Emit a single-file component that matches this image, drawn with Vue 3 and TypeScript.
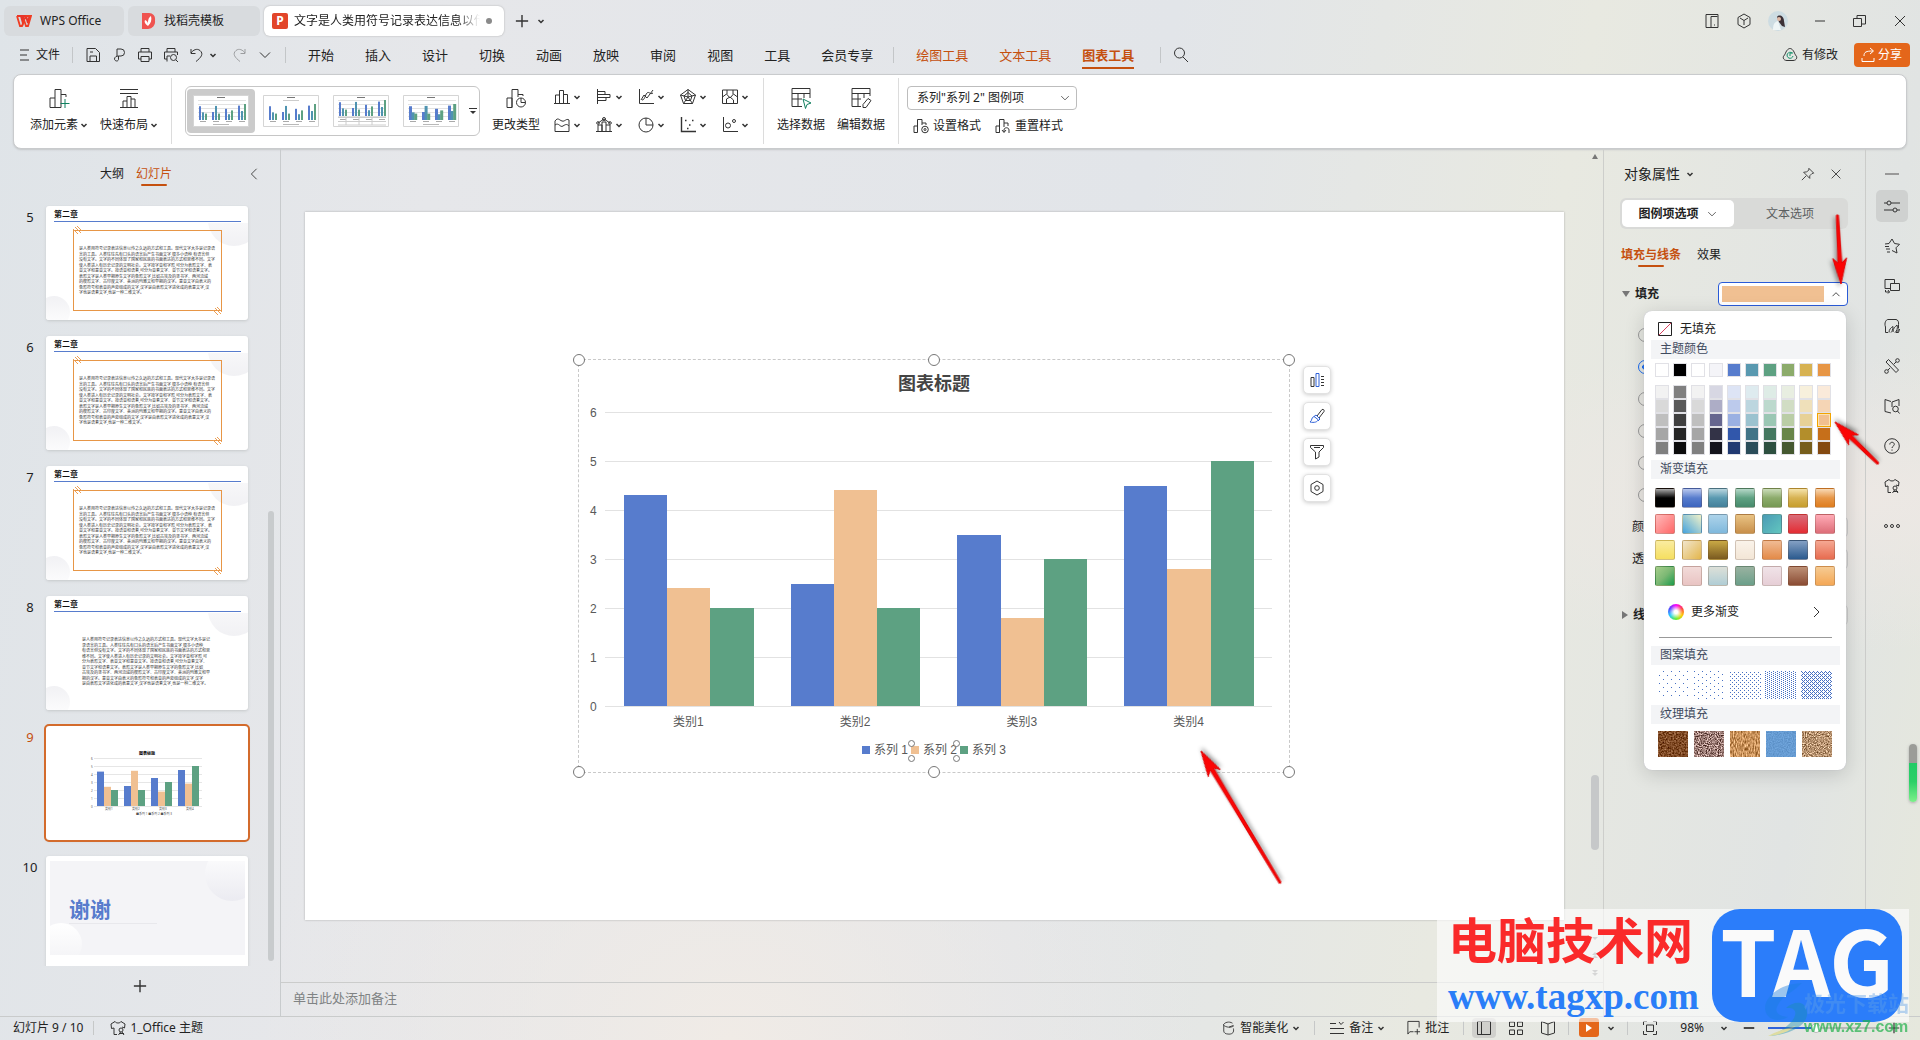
<script setup lang="ts">
import { h, ref } from 'vue'

const glyphs: Record<string, string> = {
  wps: '<path d="M1 3h4l2 7 1-3-1-4h3l2 7 1.500-7h-3L9 6" fill="none" stroke="#e8352a" stroke-width="2"/><path d="M9.500 3H15l-3 10H10L8 7l-2 6H4L1 3" fill="none" stroke="#f03c22" stroke-width="1.800"/>',
  docer: '<path d="M2 0h7a6 6 0 0 1 6 7v1a7 7 0 0 1-7 8H2z" fill="#ef5350" stroke="none"/><path d="M8 13C5 11 4 9 5 7c2 1 3 2 3 4 0-3 0-6 3-8 1 4 0 7-3 10z" fill="#fff" stroke="none"/>',
  menu: '<path d="M4 3h9M4 8h7M4 13h9"/>',
  save: '<path d="M2 1.500h8.500l4 4v9H2zM5 14V9h6.500v5M5 5h3"/>',
  export: '<path d="M6 9V2h4a3.500 3.500 0 1 1 0 7H7.500c-2 0-4 1-4 3s3.500 3 4 .5V9"/>',
  print: '<path d="M4 5V1.500h8V5M4 12H1.500V5h13v7H12M4 9.500h8v5H4z"/>',
  preview: '<path d="M4 5V1.500h8V5M4 12H1.500V5h13v3M4 14.500V9h3"/><circle cx="10.500" cy="10.500" r="3"/><path d="M13 13l2 2"/>',
  undo: '<path d="M2 2v4.500h4.500M2 6c2-3 6-5 9-2.500 4 3.500 1 7-4 11"/>',
  redo: '<path d="M14 2v4.500H9.500M14 6c-2-3-6-5-9-2.500-4 3.500-1 7 4 11"/>',
  down: '<path d="M5.500 7l2.500 2.500L10.500 7" stroke-width="1.500"/>',
  wide: '<path d="M3 5.500l5 5 5-5"/>',
  up: '<path d="M4 10.500l4-4 4 4"/>',
  left: '<path d="M11 2L5 8l6 6"/>',
  right: '<path d="M6 3l5 5-5 5"/>',
  plus: '<path d="M8 1v14M1 8h14" stroke-width="1.600"/>',
  minus: '<path d="M2 8h12" stroke-width="2"/>',
  min: '<path d="M3 8h10"/>',
  restore: '<path d="M1.500 5.500h8v8h-8zM5 5V2.500h8.500V11H10"/>',
  close: '<path d="M3 3l10 10M13 3L3 13"/>',
  search: '<circle cx="6.500" cy="6" r="5"/><path d="M10 10l5 5"/>',
  panel: '<path d="M2 1.500h12v13H2zM7 14V3.500h6.500M10 12h1"/>',
  cube: '<path d="M8 1l6 3.500v7L8 15l-6-3.500v-7zM4 5l4 2.500L12 5M8 7.500V12"/>',
  cloud: '<path d="M5 13.500c-4 0-5-4-2-6C4 4 6 1.500 8 1.500s4 2.500 5 6c3 2 2 6-2 6z"/><path d="M10 6a3 3 0 1 0 1 3M8 6h3M8 6V9" stroke="#16926b"/>',
  share: '<path d="M4 9c0-4 2-5 9-5M10 1l3.500 3L10 7M2 11v3.500h12V11"/>',
  addel: '<path d="M2 20.500V11h5v9.500zM7 11V2.500h6V20.500H7M13 7.500h5V10"/><path d="M17 12v9M12.500 16.500h9" stroke="#118060"/>',
  layout: '<path d="M2 2.500h18M2 6.500h18M2 20.500h18M5 20v-6h4v6M9 14v-4.500h4V20M13 12h4v8"/>',
  chtype: '<path d="M2 20.500V11h5v9.500zM7 20.500V2.500h6V10M13 7.500h5V9"/><circle cx="16" cy="15.500" r="4.500"/><path d="M16 11v4.500h4.500"/>',
  seldata: '<path d="M12 19.500H2v-18h18V11M2 6.500h18M8 6.500v13M14 6.500V11M2 12h10"/><path d="M13 12l8 4-4 1.500-1.500 4z" stroke="#118060"/>',
  editdata: '<path d="M11 19.500H2v-18h18V9M2 6.500h18M8 6.500v13M14 6.500V11M2 12h9"/><path d="M18 11.500l3 2-5 7h-3v-3z"/>',
  bar: '<path d="M1 15.500h16M2.500 15V7h4v8M6.500 15V2.500h4V15M10.500 6.500h4V15"/>',
  hbar: '<path d="M2.500 1v15M3 3.500h7v3H3M3 6.500h12v3H3M3 9.500h8v3H3"/>',
  line: '<path d="M2.500 1v14.500H17M4 12l3-5 3 3 6-8M5 12c3 0 3-5 5-7s3 2 6 0"/>',
  radar: '<path d="M9 1.500l7.500 5.500-3 8.500h-9L1.500 7zM9 4.500l4 3.500-1.500 4.500h-5L5 8zM9 1.500V9M1.500 7L9 9l7.500-2M4.500 15.500L9 9l4.500 6.500"/>',
  map: '<path d="M1.500 2h15v13.500h-15zM1.500 9l4-3 3.500 4 3.500-4 4 3M6 2v4M12 2v4M5.500 15V11l3.500-2 3.500 3v3"/>',
  area: '<path d="M2 15.500V5c3-4 4-1 7 0 3 1 4-3 7-1v11.500zM2 9c4-3 5 3 8 1 3-2 4-2 6 0"/>',
  combo: '<path d="M1 15.500h16M3 15V9h4v6M7 15V6h4v9M11 9h4v6M3 7l6-4 6 4"/><circle cx="9" cy="3" r="1.500"/><circle cx="3" cy="7" r="1.300"/><circle cx="15" cy="7" r="1.300"/>',
  pie: '<circle cx="9" cy="9" r="7"/><path d="M9 2v7h7"/>',
  scatter: '<path d="M2.500 1v14.500H17M6 4.500h1.500M10 9h1.500M13 4.500h1.500M8 12.500h1.500" stroke-width="1.400"/>',
  bubble: '<path d="M2.500 1v14.500H17"/><circle cx="7" cy="9.500" r="2.500"/><circle cx="13" cy="5" r="1.500"/>',
  fmt: '<path d="M1 14.500V8h3.500v6.500zM4.500 14V1.500H9V7M9 5h4v2"/><circle cx="12" cy="11.500" r="3.300"/><circle cx="12" cy="11.500" r="1"/>',
  reset: '<path d="M1 14.500V8h3.500v6.500zM4.500 14.500V1.500H9V9M9 5h4v3M14 15V12c0-3-5-3-5 0v2M7 12l2 2.500L11 12"/>',
  pin: '<path d="M9 1.500L14.500 7l-2 .5-2.500 2.500v3L3 6l3.500-.5L9 3.500zM6 10l-5 5"/>',
  chartel: '<path d="M2 5.500h3v9H2zM12 4.500h3M12 7.500h3M12 10.500h3M12 13.500h3"/><path d="M7 1.500h3v13H7z" stroke="#2f62d9"/>',
  brush: '<path d="M8 8l5-6.500c1.500-.5 2.500.5 2 2L10 10z"/><path d="M5 8.500l2-1.500 4 4-2 2M5 8.500c-3 1-1.500 4-4 5.500 4 1 8 0 8-2.500z" stroke="#2f62d9"/>',
  funnel: '<path d="M1.500 1.500h13v2L10 8v5l-3.500 2V8L1.500 3.500zM5 3.500h6"/>',
  hexa: '<path d="M8 1l6 3.500v7L8 15l-6-3.500v-7z"/><circle cx="8" cy="8" r="2.300"/>',
  sliders: '<path d="M0 5h3M7 5h9M0 12h9M13 12h3"/><circle cx="5" cy="5" r="2"/><circle cx="11" cy="12" r="2"/>',
  star: '<path d="M5 5.500L8 1l2.500 4.500 5 .8-3.500 3.500 1 5.200-5-2.500M1 6l4-.5M1 8.500h4M2 11h4M3 14h3"/>',
  shapes: '<path d="M1 1.500h9.500v4M6 10.500H1v-9M6.500 5.500h9v7h-9zM1.500 12v2h4M4 12l1.500 2L4 15.500"/>',
  image: '<path d="M4 14.500H1.500V9C0 5 2 1.500 4 1.500h8c2 0 3 3 2.500 5v4M5 14.500c0-3 2-5 4-6 0 3-1 5-2 6M9 14c0-4 2-5 4-7 1 3 0 6-2 7.500M12 14.500l3.500-3.500-1 3.500z"/>',
  tools: '<path d="M2 4l2.500-2.500L14.500 12 12 14.500zM10 6l2-2M6 10l-2 2"/><circle cx="13.500" cy="2.500" r="1.800"/><circle cx="2.500" cy="13.500" r="1.800"/>',
  book: '<path d="M7 3.500L1 1.500v12l6 1.500M8 4l7-2.500V8M8 4v5"/><circle cx="11.500" cy="11" r="2.800"/><path d="M13.500 13l2 2.500"/>',
  help: '<circle cx="8" cy="8" r="7.300"/><path d="M5.800 6.500c0-3 4.500-3 4.500 0 0 1.500-2.300 1.800-2.300 3.500M8 11.500v1.200"/>',
  shirt: '<path d="M4 14.500V8L1.500 8.500 1 4l4-2.500c1 2 5 2 6 0L15 4l-.5 4L12 7M4 14.500h3"/><circle cx="11" cy="10" r="2"/><path d="M8.500 15l2-3M12 12l2 3M9 13.500h5"/>',
  dots: '<circle cx="2" cy="8" r="1.500"/><circle cx="8" cy="8" r="1.500"/><circle cx="14" cy="8" r="1.500"/>',
  magic: '<path d="M2 4.500v7c0 2 2 3.500 6 3.500s6-2 5-6.500M1.500 4.500C3 1.500 8 0 12 2.500M1.500 4.500c3 3 9 3.500 12 1M8 7l5-2"/>',
  notes: '<path d="M1 3.500h6M1 8.500h14M1 13.500h14M10 2l2 2.500L14.500 2"/>',
  comment: '<path d="M8 12.500H4L2 15V1.500h12V8M12 9.500v6M9 12.500h6"/>',
  normal: '<path d="M1.500 1.500h13v13h-13zM5.500 1.500v13"/>',
  grid: '<path d="M1.500 2h5v4.500h-5zM9.500 2h5v4.500h-5zM1.500 10h5v4.500h-5zM9.500 10h5v4.500h-5z"/>',
  read: '<path d="M8 4L1.500 1.500V13L8 15l6.500-2V1.500zM8 4v11"/>',
  fit: '<path d="M1.500 5V1.500H5M11 1.500h3.500V5M14.500 11v3.500H11M5 14.500H1.500V11M4.500 5h7v6.500h-7z"/>',
  nofill: '<path d="M1.500 1.500h13v13h-13z" stroke="#222"/><path d="M2 14L14 2" stroke="#d8405f"/>',
}
const Icon = (p: { n: string; s?: number; box?: number }) =>
  h('svg', {
    class: 'icon', width: p.s ?? 16, height: p.s ?? 16,
    viewBox: `0 0 ${p.box ?? 16} ${p.box ?? 16}`, 'aria-hidden': 'true', innerHTML: glyphs[p.n],
  })
Icon.props = ['n', 's', 'box']

const Arrow = (p: { len: number }) =>
  h('svg', { class: 'arrow', width: 1, height: 1, 'aria-hidden': 'true' }, [
    h('path', { d: `M0 0L-26 -7L-21 -2L-${p.len} -1V1L-21 2L-26 7Z`, fill: '#fb0404', stroke: '#e00505' }),
  ])
Arrow.props = ['len']

const menus = ['开始', '插入', '设计', '切换', '动画', '放映', '审阅', '视图', '工具', '会员专享']
const smallIcons = ['bar', 'hbar', 'line', 'radar', 'map', 'area', 'combo', 'pie', 'scatter', 'bubble']

const data = [[4.3, 2.4, 2], [2.5, 4.4, 2], [3.5, 1.8, 3], [4.5, 2.8, 5]]
const barColors = ['#577ccd', '#f0c092', '#5da182']
const styleColors = ['#577ccd', '#4f93b0', '#5da182']
const names = ['系列 1', '系列 2', '系列 3']
const handles = [[0, 0], [50, 0], [100, 0], [0, 100], [50, 100], [100, 100]]

const textA = [
  '是人类用符号记录表达信息以传之久远的方式和工具。现代文字大多是记录语',
  '言的工具。人类往往先有口头的语言后产生书面文字,很多小语种,有语言但',
  '没有文字。文字的不同体现了国家和民族的书面表达的方式和思维不同。文字',
  '使人类进入有历史记录的文明社会。文字按字音和字形,可分为表形文字、表',
  '音文字和意音文字。按语音和语素,可分为音素文字、音节文字和语素文字。',
  '表形文字是人类早期原生文字的象形文字,比如古埃及的圣书字、两河流域',
  '的楔形文字、古印度文字、美洲的玛雅文和早期的汉字。意音文字由表义的',
  '象形符号和表音的声旁组成的文字,汉字是由表形文字进化成的表意文字,汉',
  '字也是语素文字,也是一种二维文字。',
]
const textB = [
  '是人类用符号记录表达信息以传之久远的方式和工具。现代文字大多是记',
  '录语言的工具。人类往往先有口头的语言后产生书面文字,很多小语种,',
  '有语言但没有文字。文字的不同体现了国家和民族的书面表达的方式和思',
  '维不同。文字使人类进入有历史记录的文明社会。文字按字音和字形,可',
  '分为表形文字、表音文字和意音文字。按语音和语素,可分为音素文字、',
  '音节文字和语素文字。表形文字是人类早期原生文字的象形文字,比如',
  '古埃及的圣书字、两河流域的楔形文字、古印度文字、美洲的玛雅文和早',
  '期的汉字。意音文字由表义的象形符号和表音的声旁组成的文字,汉字',
  '是由表形文字进化成的表意文字,汉字也是语素文字,也是一种二维文字。',
]
const slides = [
  { n: 5, kind: 'frame' }, { n: 6, kind: 'frame' }, { n: 7, kind: 'frame' },
  { n: 8, kind: 'plain' }, { n: 9, kind: 'minichart' }, { n: 10, kind: 'end' },
]

const theme = ['#fff', '#000', '#fff', '#f4f4f8', '#577ccd', '#5999b0', '#5ea182', '#8cab6b', '#d7b252', '#e79646']
const ramps = [
  ['#f2f2f2', '#808080', '#f2f2f2', '#d7d7e3', '#dde4f5', '#deebef', '#deece6', '#e8eee1', '#f7f0dc', '#faeada'],
  ['#d9d9d9', '#595959', '#d9d9d9', '#adadc6', '#bccaec', '#bcd6df', '#bcd9cd', '#d1ddc4', '#efe0ba', '#f5d5b5'],
  ['#bfbfbf', '#404040', '#bfbfbf', '#66668f', '#9ab0e2', '#9bc2cf', '#9bc7b4', '#bacda6', '#e7d197', '#f1c090'],
  ['#a6a6a6', '#262626', '#a6a6a6', '#333347', '#3157ab', '#417487', '#457860', '#688549', '#b38e2b', '#c66f1a'],
  ['#808080', '#0d0d0d', '#808080', '#14141c', '#213a72', '#2b4d5a', '#2e5040', '#455830', '#775e1c', '#844a11'],
]
const gradients = [
  '#aaa,#000 50%,#000', '#b9c8ee,#577ccd 50%,#3c64be', '#b9d6df,#5999b0 50%,#44809a', '#b5d8c8,#5ea182 50%,#478a6c', '#cbdcba,#8cab6b 50%,#769853', '#f5e3ab,#d7b252 50%,#c69d2c', '#f8d9b5,#e79646 50%,#df7d1e',
  '135deg,#ffb9b9,#ff6868', '45deg,#45a3de,#f2f2c8', '#add3ea,#7fb8dc', '#e9c384,#c88f4a', '135deg,#4a9bb5,#62c6bf', '#d96d7a,#e42c33', '#ffabb6,#dd6d78',
  '#faeca0,#f5df60', '135deg,#f1e5cc,#e3b64c', '#c9a945,#7a5a20', '#faf3ea,#f3e6d6', '#f0bb94,#e38a48', '#84a0c4,#2b5a8e', '#f5a893,#e76c50',
  '135deg,#a5ce8a,#7cb874 50%,#1c9c4c', '#f2dbd9,#e9c4c3', '#dde0d8,#b0cdd5', '#99b2a0,#6b9f8a', '#f0e3e8,#e6ced6', '#bd9076,#8a4b33', '#f6cb93,#f4a755',
]
const patterns = [
  { w: 8, h: 8, d: [[0, 4], [4, 0]] },
  { w: 8, h: 6, d: [[0, 0], [4, 3]] },
  { w: 4, h: 4, d: [[0, 1], [2, 3]] },
  { w: 4, h: 2, d: [[0, 0], [2, 1]] },
  { w: 4, h: 4, d: [[0, 0], [1, 1], [3, 1], [2, 2], [1, 3], [3, 3]] },
]
const textures = [
  { c: '#7a4520', f: '0.6', k: 1 }, { c: '#957670', f: '0.9', k: 2.2 }, { c: '#c48d56', f: '0.9 0.3', k: 1.2 },
  { c: '#6196cd', f: '0.8', k: 0.3 }, { c: '#b28e6c', f: '0.9', k: 1.6 },
]
const sideTools = ['star', 'shapes', 'image', 'tools', 'book', 'help', 'shirt', 'dots']
const zoom = ref(42)
</script>

<template>
  <div class="app">
    <header class="titlebar">
      <button class="doc wps"><Icon n="wps" />WPS Office</button>
      <button class="doc docer"><Icon n="docer" />找稻壳模板</button>
      <button class="doc active"><b class="p">P</b><span class="fade">文字是人类用符号记录表达信息以传</span><i class="dot"></i></button>
      <button class="bare newtab" aria-label="新建"><Icon n="plus" :s="14" /></button>
      <button class="bare" aria-label="标签列表"><Icon n="down" /></button>
      <div class="winbtns">
        <button class="bare" aria-label="面板"><Icon n="panel" /></button>
        <button class="bare" aria-label="应用"><Icon n="cube" /></button>
        <svg class="avatar" width="20" height="20" viewBox="0 0 20 20"><circle cx="10" cy="10" r="10" fill="#cddce2" /><path d="M9 6c2-3 7-1 7 4l1 6-3-1-3-4z" fill="#3b3036" /><circle cx="11" cy="8" r="2" fill="#dfb9a6" /><path d="M5 19c0-5 1-8 5-9l3 9z" fill="#eef5f6" /></svg>
        <button class="bare" aria-label="最小化"><Icon n="min" /></button>
        <button class="bare" aria-label="还原"><Icon n="restore" /></button>
        <button class="bare" aria-label="关闭"><Icon n="close" /></button>
      </div>
    </header>

    <nav class="menubar">
      <button class="bare file"><Icon n="menu" />文件</button>
      <i class="vsep"></i>
      <div class="quick">
        <button v-for="q in ['save', 'export', 'print', 'preview']" :key="q" class="bare" :aria-label="q"><Icon :n="q" /></button>
        <button class="bare undo" aria-label="撤销"><Icon n="undo" /><Icon n="down" /></button>
        <button class="bare off" aria-label="恢复"><Icon n="redo" /></button>
        <button class="bare" aria-label="更多"><Icon n="wide" /></button>
      </div>
      <i class="vsep"></i>
      <div class="menus">
        <button v-for="m in menus" :key="m" class="bare menu">{{ m }}</button>
      </div>
      <i class="vsep"></i>
      <div class="menus tools">
        <button class="bare menu">绘图工具</button>
        <button class="bare menu">文本工具</button>
        <button class="bare menu current">图表工具</button>
      </div>
      <i class="vsep late"></i>
      <button class="bare find" aria-label="搜索"><Icon n="search" /></button>
      <button class="bare changed"><Icon n="cloud" />有修改</button>
      <button class="share"><Icon n="share" />分享</button>
    </nav>

    <section class="ribbon">
      <div class="group first">
        <button class="bare big"><Icon n="addel" :s="22" :box="22" /><span>添加元素<Icon n="down" class="chev" /></span></button>
        <button class="bare big"><Icon n="layout" :s="22" :box="22" /><span>快速布局<Icon n="down" class="chev" /></span></button>
      </div>
      <i class="rsep"></i>
      <div class="gallery">
        <button v-for="g in 4" :key="g" class="bare style" :class="{ on: g === 1 }" :aria-label="'样式 ' + g">
          <svg width="56" height="32" viewBox="0 0 56 32">
            <path d="M.5.500h55v31H.5z" fill="#fff" stroke="#d5d5d5" />
            <path d="M24 2.500h8" stroke="#777" />
            <path v-if="g === 2" d="M20 5.500h16" stroke="#ccc" />
            <path v-else d="M5 5.500h48M5 9.500h48M5 13.500h48M5 17.500h48M5 21.500h48" stroke="#e2e2e2" />
            <template v-for="(grp, i) in data" :key="i">
              <rect v-for="(v, j) in grp" :key="j" :x="6 + i * 13 + j * (g === 4 ? 2.600 : 3)" :y="(g === 3 ? 21 : 25) - v * 3.200" :width="g === 4 ? 3 : 2" :height="v * 3.200" :fill="styleColors[j]" />
              <path :d="`M${7 + i * 13} ${g === 3 ? 24.500 : 26.500}h6`" stroke="#aaa" />
            </template>
            <path v-if="g === 3" d="M5 22.500h48M5 26.500h48M5 30h48M13 22v8M26 22v8M39 22v8" stroke="#ccc" />
            <path v-else d="M20 29.500h16" stroke="#b9b9b9" />
          </svg>
        </button>
        <button class="bare more" aria-label="更多样式"><svg width="8" height="8"><path d="M0 1.500h8" stroke="#333" /><path d="M1 4h6L4 7z" fill="#333" /></svg></button>
      </div>
      <button class="bare big change"><Icon n="chtype" :s="22" :box="22" /><span>更改类型</span></button>
      <div class="minis">
        <button v-for="s in smallIcons" :key="s" class="bare mini" :aria-label="s"><Icon :n="s" :s="18" :box="18" /><Icon n="down" class="chev" /></button>
      </div>
      <i class="rsep"></i>
      <div class="group">
        <button class="bare big"><Icon n="seldata" :s="22" :box="22" /><span>选择数据</span></button>
        <button class="bare big"><Icon n="editdata" :s="22" :box="22" /><span>编辑数据</span></button>
      </div>
      <i class="rsep"></i>
      <div class="elems">
        <div class="selwrap">
          <select aria-label="图表元素"><option>系列"系列 2" 图例项</option></select><Icon n="wide" :s="12" />
        </div>
        <div class="pair">
          <button class="bare"><Icon n="fmt" />设置格式</button>
          <button class="bare"><Icon n="reset" />重置样式</button>
        </div>
      </div>
    </section>

    <div class="body">
      <aside class="outline">
        <div class="ohead">
          <button class="bare">大纲</button>
          <button class="bare cur">幻灯片</button>
          <button class="bare fold" aria-label="收起"><Icon n="left" :s="14" /></button>
        </div>
        <div class="list">
          <div v-for="s in slides" :key="s.n" class="row" :class="{ sel: s.n === 9 }">
            <span class="num">{{ s.n }}</span>
            <div class="thumb" :class="s.kind">
              <template v-if="s.kind === 'frame' || s.kind === 'plain'">
                <h4>第二章</h4>
                <i class="bub tr"></i><i class="bub bl"></i>
                <div class="paper">
                  <p v-for="(t, i) in s.kind === 'frame' ? textA : textB" :key="i">{{ t }}</p>
                  <template v-if="s.kind === 'frame'">
                    <svg v-for="c in ['c1', 'c2']" :key="c" class="clip" :class="c" width="9" height="8"><path d="M0 3l5 5M2 1l6 6M4 0l5 5" stroke="#ec9f55" fill="none" /></svg>
                  </template>
                </div>
              </template>
              <svg v-else-if="s.kind === 'minichart'" width="202" height="114" viewBox="0 0 202 114">
                <text x="101" y="29" class="t4" text-anchor="middle" font-weight="700">图表标题</text>
                <path v-for="k in 7" :key="k" :d="`M48 ${24.500 + k * 8}h108`" stroke="#e6e6e6" />
                <text v-for="k in 7" :key="'n' + k" x="45" :y="26 + k * 8" class="t3">{{ 7 - k }}</text>
                <template v-for="(grp, i) in data" :key="i">
                  <rect v-for="(v, j) in grp" :key="j" :x="51 + i * 27 + j * 7" :y="80 - v * 8" width="7" :height="v * 8" :fill="barColors[j]" />
                  <text :x="59 + i * 27" y="84" class="t3">类别{{ i + 1 }}</text>
                </template>
                <text x="90" y="89" class="t3">■系列 1 ■系列 2 ■系列 3</text>
              </svg>
              <div v-else class="thanks"><i class="big-tr"></i><i class="big-bl"></i><strong>谢谢</strong></div>
            </div>
          </div>
          <i class="sbar"></i>
        </div>
        <button class="bare addslide" aria-label="新建幻灯片"><Icon n="plus" :s="14" /></button>
      </aside>

      <main class="stage">
        <div class="canvas">
          <div class="slide">
            <div class="chart">
              <h2>图表标题</h2>
              <div class="plot">
                <div v-for="k in 7" :key="k" class="tick"><span>{{ 7 - k }}</span></div>
                <div class="groups">
                  <div v-for="(grp, i) in data" :key="i" class="grp">
                    <i v-for="(v, j) in grp" :key="j" :style="{ height: (v / 6) * 100 + '%', background: barColors[j] }"></i>
                  </div>
                </div>
              </div>
              <div class="cats"><span v-for="i in 4" :key="i">类别{{ i }}</span></div>
              <div class="legend">
                <span v-for="(n, i) in names" :key="n"><i :style="{ background: barColors[i] }"></i>{{ n }}<template v-if="i === 1"><b v-for="k in 4" :key="k" class="lh" :class="'h' + k"></b></template></span>
              </div>
              <b v-for="(p, i) in handles" :key="i" class="handle" :style="{ left: p[0] + '%', top: p[1] + '%' }"></b>
              <div class="floaters">
                <button v-for="f in ['chartel', 'brush', 'funnel', 'hexa']" :key="f" :aria-label="f"><Icon :n="f" /></button>
              </div>
              <Arrow class="a3" :len="154" />
            </div>
          </div>
          <i class="vthumb"></i>
          <i class="tri up"></i>
          <div class="pagers"><i class="tri down"></i><span><i class="tri up2"></i><i class="tri up2"></i></span><span><i class="tri down"></i><i class="tri down"></i></span></div>
        </div>
        <div class="notes">单击此处添加备注</div>
      </main>

      <aside class="props">
        <div class="phead"><span>对象属性</span><Icon n="down" /><button class="bare pinb" aria-label="固定"><Icon n="pin" :s="14" /></button><button class="bare" aria-label="关闭"><Icon n="close" :s="14" /></button></div>
        <div class="seg"><button class="on">图例项选项<Icon n="wide" :s="12" /></button><button>文本选项</button></div>
        <div class="ptabs"><button class="bare cur">填充与线条</button><button class="bare">效果</button></div>
        <div class="fillrow">
          <i class="caret"></i><span>填充</span>
          <div class="combo">
            <button class="swbtn" aria-label="填充颜色"><i></i><Icon n="up" :s="14" /></button>
            <div class="popup">
              <button class="bare nofill"><Icon n="nofill" />无填充</button>
              <h5>主题颜色</h5>
              <div class="sw"><button v-for="(c, i) in theme" :key="i" :aria-label="c" :style="{ background: c }"></button></div>
              <div class="sw ramp">
                <template v-for="(r, y) in ramps" :key="y"><button v-for="(c, x) in r" :key="x" :aria-label="c" :class="{ pick: y === 2 && x === 9 }" :style="{ background: c }"></button></template>
              </div>
              <h5>渐变填充</h5>
              <div class="grads"><button v-for="(g, i) in gradients" :key="i" :aria-label="'渐变 ' + (i + 1)" :style="{ background: `linear-gradient(${g})` }"></button></div>
              <button class="bare moreg"><i class="wheel"></i>更多渐变<Icon n="right" /></button>
              <h5>图案填充</h5>
              <div class="tiles">
                <svg v-for="(p, i) in patterns" :key="i" width="32" height="28" shape-rendering="crispEdges">
                  <defs><pattern :id="'pt' + i" :width="p.w" :height="p.h" patternUnits="userSpaceOnUse"><rect v-for="(d, j) in p.d" :key="j" :x="d[0]" :y="d[1]" width="1" height="1" fill="#4670c4" /></pattern></defs>
                  <rect width="32" height="28" :fill="`url(#pt${i})`" />
                </svg>
              </div>
              <h5>纹理填充</h5>
              <div class="tiles tex">
                <svg v-for="(t, i) in textures" :key="i" width="30" height="26">
                  <defs><filter :id="'tx' + i" x="0" y="0" width="1" height="1" color-interpolation-filters="sRGB"><feTurbulence type="fractalNoise" :baseFrequency="t.f" numOctaves="2" :seed="i + 2" /><feColorMatrix :values="`${t.k} 0 0 0 ${0.500 - t.k / 2}  ${t.k} 0 0 0 ${0.500 - t.k / 2}  ${t.k} 0 0 0 ${0.500 - t.k / 2}  0 0 0 0 1`" result="n" /><feComposite in="SourceGraphic" in2="n" operator="arithmetic" k2="1" k3="0.700" k4="-0.330" /></filter></defs>
                  <rect width="30" height="26" :fill="t.c" :filter="`url(#tx${i})`" />
                </svg>
              </div>
            </div>
            <Arrow class="a1" :len="69" />
            <Arrow class="a2" :len="60" />
          </div>
        </div>
        <div class="radios"><input v-for="i in 6" :key="i" type="radio" name="fill" :checked="i === 2" :aria-label="'填充方式 ' + i" /></div>
        <div class="prow"><span>颜色</span><i></i></div>
        <div class="prow"><span>透明度</span><i></i></div>
        <div class="prow line"><i class="caret r"></i><span>线条</span><i></i></div>
      </aside>

      <aside class="rail">
        <button class="bare" aria-label="收起"><svg width="14" height="2"><path d="M0 1h14" stroke="#999" stroke-width="2" /></svg></button>
        <button class="bare on" aria-label="属性"><Icon n="sliders" /></button>
        <button v-for="t in sideTools" :key="t" class="bare" :aria-label="t"><Icon :n="t" /></button>
        <i class="meter"></i>
      </aside>
    </div>

    <footer class="status">
      <span class="pg">幻灯片 9 / 10</span><i class="ssep"></i>
      <button class="bare thm"><Icon n="shirt" />1_Office 主题</button>
      <div class="sright">
        <button class="bare"><Icon n="magic" :s="14" />智能美化<Icon n="down" class="chev" /></button><i class="ssep w"></i>
        <button class="bare"><Icon n="notes" />备注<Icon n="down" class="chev" /></button>
        <button class="bare cm"><Icon n="comment" :s="15" />批注</button><i class="ssep cs"></i>
        <button class="bare vw on" aria-label="普通"><Icon n="normal" /></button>
        <button class="bare vw" aria-label="浏览"><Icon n="grid" /></button>
        <button class="bare vw" aria-label="阅读"><Icon n="read" /></button><i class="ssep n"></i>
        <button class="bare play" aria-label="播放"><svg width="8" height="8"><path d="M1 0l6 4-6 4z" fill="#fff" /></svg></button><Icon n="down" /><i class="ssep n"></i>
        <button class="bare fitb" aria-label="适应"><Icon n="fit" /></button>
        <span class="pct">98%</span><Icon n="down" />
        <button class="bare mn" aria-label="缩小"><Icon n="minus" :s="14" /></button>
        <input v-model="zoom" type="range" min="0" max="100" aria-label="缩放" />
        <button class="bare" aria-label="放大"><Icon n="plus" :s="12" /></button>
      </div>
    </footer>

    <div class="wm">
      <div class="wtext"><strong>电脑技术网</strong><span>www.tagxp.com</span></div>
      <div class="tag">TAG</div>
      <div class="wm2">
        <svg width="46" height="56" viewBox="0 0 46 56"><path d="M38 1C10 2-6 22 4 34c4 5 14 5 20 1-10-1-14-5-10-12 4-9 14-12 24-22z" fill="#1a7fe0" /><path d="M6 54c22-2 42-12 36-28-3-8-14-6-20 0 10-1 12 5 6 13-6 7-14 12-22 15z" fill="#1a90b0" /><path d="M4 54c12-1 20-4 28-10-8 2-18 5-28 10z" fill="#d9d24a" /></svg>
        <div><b>极光下载站</b><em>www.xz7.com</em></div>
      </div>
    </div>
  </div>
</template>

<style>
body { margin: 0; }
</style>

<style scoped>
.app { position: relative; height: 100vh; min-height: 1040px; display: flex; flex-direction: column; overflow: hidden; font: 12px/16px "Noto Sans", "Noto Sans CJK SC", sans-serif; color: #222;
  background: radial-gradient(ellipse at 38% 100%, #f0ebe6 0, rgba(240, 235, 230, 0) 28%), radial-gradient(ellipse at 96% 48%, #ede8e4 0, rgba(237, 232, 228, 0) 20%), linear-gradient(100deg, #dfe4e8 0, #e6e7ea 22%, #e2e5e9 56%, #e8e9e1 76%, #e1e4e3 92%, #e6e8dd 100%); }
.app * { box-sizing: border-box; }
button { font: inherit; color: inherit; cursor: pointer; }
.bare { border: 0; padding: 0; background: none; display: flex; align-items: center; white-space: nowrap; flex: none; }
:deep(.icon) { flex: none; fill: none; stroke: #333; stroke-width: 1; display: block; }
.chev { margin: 0 -4px; }
i { font-style: normal; display: block; flex: none; }

.titlebar { display: flex; align-items: center; height: 36px; padding: 6px 12px 0 4px; flex: none; }
.doc { height: 30px; border: 0; border-radius: 6px; background: #d8dbde; margin-right: 4px; padding: 0 12px; display: flex; align-items: center; gap: 8px; white-space: nowrap; }
.doc.wps { width: 120px; }
.doc.docer { width: 132px; }
.doc.active { width: 240px; background: #fff; box-shadow: 0 0 2px #aaa; padding: 0 8px; gap: 6px; }
.p { width: 16px; height: 16px; border-radius: 2px; background: #e2452a; color: #fff; font-size: 12px; line-height: 16px; }
.fade { width: 186px; overflow: hidden; text-align: left; flex: none; mask-image: linear-gradient(90deg, #000 88%, transparent); }
.dot { width: 6px; height: 6px; border-radius: 3px; background: #8a8a8a; }
.newtab { margin: 0 4px 0 7px; }
.winbtns { margin-left: auto; display: flex; align-items: center; gap: 24px; }
.winbtns > :nth-child(-n+2) { margin-right: -8px; }

.menubar { display: flex; align-items: center; height: 38px; padding: 0 10px 1px 0; flex: none; }
.file { margin-left: 16px; gap: 4px; }
.vsep { width: 1px; height: 16px; background: #c3c6c8; margin: 0 12px; }
.quick { display: flex; align-items: center; gap: 10px; width: 188px; }
.quick .undo { gap: 0; }
.off { opacity: .4; }
.menus { display: flex; gap: 31px; font-size: 13px; margin-left: 10px; }
.menu { height: 28px; }
.tools { color: #c5500f; }
.menus + .vsep { margin-left: 20px; }
.menubar .late { margin-left: 26px; }
.current { font-weight: 700; position: relative; }
.current::after { content: ""; position: absolute; left: 0; right: 0; bottom: 0; height: 2px; background: #c5500f; }
.changed { margin-left: auto; gap: 4px; }
.share { margin-left: 16px; width: 56px; height: 24px; border: 0; border-radius: 4px; background: #e4661a; color: #fff; display: flex; align-items: center; gap: 2px; padding: 0 6px; white-space: nowrap; }
.share :deep(.icon) { stroke: #fff; }

.ribbon { flex: none; height: 75px; margin: 0 13px; border: 1px solid #c9cbcd; border-radius: 8px; background: #fff; display: flex; align-items: center; padding-bottom: 2px; box-shadow: 0 1px 2px #c4c6c8; }
.group { display: flex; gap: 12px; }
.first { margin-left: 16px; }
.big { flex-direction: column; gap: 6px; }
.big span { display: flex; align-items: center; height: 20px; gap: 2px; }
.rsep { width: 1px; height: 66px; background: #dcdcdc; margin: 0 13px; }
.gallery { display: flex; align-items: center; gap: 2px; width: 295px; height: 50px; border: 1px solid #c6c6c6; border-radius: 6px; padding-left: 1px; }
.style { width: 68px; height: 44px; border-radius: 4px; justify-content: center; }
.style.on { background: #cbcbcb; }
.more { width: 12px; justify-content: center; }
.change { margin: 0 13px 0 12px; }
.minis { display: grid; grid-template-columns: repeat(5, 28px); column-gap: 14px; row-gap: 8px; }
.minis + .rsep { margin-left: 14px; }
.mini { height: 20px; gap: 2px; }
.elems { display: flex; flex-direction: column; gap: 6px; margin-left: -5px; }
.selwrap { position: relative; width: 170px; }
.selwrap select { appearance: none; width: 100%; height: 24px; border: 1px solid #bdbdbd; border-radius: 4px; background: #fff; font: inherit; color: inherit; padding: 0 20px 0 9px; display: block; }
.selwrap :deep(.icon) { position: absolute; right: 6px; top: 6px; }
.pair { display: flex; gap: 14px; padding-left: 6px; }
.pair .bare { gap: 4px; height: 20px; }

.body { flex: 1; min-height: 0; display: flex; }
.outline { width: 281px; flex: none; border-right: 1px solid #c8cbcd; display: flex; flex-direction: column; }
.ohead { height: 56px; padding: 0 19px 6px 100px; display: flex; align-items: center; gap: 12px; }
.cur { color: #c5500f; position: relative; }
.cur::after { content: ""; position: absolute; left: 50%; margin-left: -13px; width: 26px; bottom: -4px; height: 2px; background: #c5500f; border-radius: 1px; }
.fold { margin-left: auto; }
.list { flex: 1; min-height: 0; overflow: hidden; position: relative; display: flex; flex-direction: column; gap: 16px; padding-top: 1px; }
.row { display: flex; flex: none; }
.num { width: 46px; padding: 3px 0 0 14px; text-align: center; font-size: 13px; }
.thumb { width: 202px; height: 114px; background: #fff; border-radius: 3px; box-shadow: 0 1px 3px #c5c8ca; position: relative; overflow: hidden; }
.sel .num { color: #c5500f; }
.sel .thumb { outline: 2px solid #d36b2c; }
.thumb h4 { margin: 0 7px 0 8px; font-size: 8px; line-height: 15px; border-bottom: 1px solid #577ccd; color: #111; }
.paper { position: relative; z-index: 1; margin: 8px 26px 0 27px; height: 81px; border: 1px solid #e79646; padding: 15px 5px; display: flex; flex-direction: column; justify-content: space-between; }
.plain .paper { border-color: transparent; padding: 16px 8px 14px; }
.paper p { margin: 0; font-size: 4px; line-height: 5px; white-space: nowrap; color: #333; }
.clip { position: absolute; }
.c1 { left: -1px; top: -5px; }
.c2 { right: -1px; bottom: -5px; }
.bub { position: absolute; border-radius: 50%; background: linear-gradient(#fff, #f1f1f4); }
.tr { width: 52px; height: 52px; right: -12px; top: -12px; z-index: 0; clip-path: inset(29px 0 0 0); }
.bl { width: 32px; height: 32px; left: -8px; bottom: -8px; background: linear-gradient(#f1f1f4, #fff); }
.t4 { font-size: 4px; }
.t3 { font-size: 3px; fill: #555; }
.thanks { margin: 5px 3px 0 4px; height: 94px; background: #f4f4f7; position: relative; overflow: hidden; padding: 34px 0 0 19px; }
.thanks strong { display: block; width: 88px; font-size: 21px; line-height: 28px; color: #577ccd; border-bottom: 1px solid #e8e8ec; position: relative; }
.big-tr { position: absolute; right: -14px; top: -14px; width: 54px; height: 54px; border-radius: 50%; background: linear-gradient(#fff, #ebebf1); }
.big-bl { position: absolute; left: -10px; bottom: -10px; width: 42px; height: 42px; border-radius: 50%; background: linear-gradient(#fff, #f2f2f5); }
.sbar { position: absolute; right: 6px; top: 306px; width: 6px; height: 450px; border-radius: 3px; background: #c8cbcd; }
.addslide { height: 50px; align-self: center; padding-bottom: 10px; }

.stage { flex: 1; min-width: 0; display: flex; flex-direction: column; }
.canvas { flex: 1; min-height: 0; position: relative; padding: 63px 39px 0 24px; }
.slide { position: relative; aspect-ratio: 1259 / 708; background: #fff; box-shadow: 0 0 2px #aaa; }
.chart { position: absolute; left: 22%; margin-left: -4px; top: 147px; width: 712px; height: 414px; border: 1px dashed #c9c9c9; font-family: "Liberation Sans", "Noto Sans CJK SC", sans-serif; color: #595959; padding: 12px 17px 0 26px; }
.chart h2 { margin: 0; font-size: 18px; line-height: 24px; text-align: center; color: #444; padding-right: 9px; }
.plot { position: relative; height: 295px; margin-top: 16px; display: flex; flex-direction: column; justify-content: space-between; }
.tick { height: 1px; background: #e2e2e2; display: flex; align-items: center; }
.tick span { width: 20px; margin-left: -20px; text-align: left; padding-left: 5px; }
.groups { position: absolute; inset: 0 0 1px 0; display: flex; }
.grp { flex: 1; display: flex; align-items: flex-end; padding: 0 18px 0 19px; }
.grp i { flex: 1; }
.cats { display: flex; margin-top: 7px; }
.cats span { flex: 1; text-align: center; }
.legend { display: flex; justify-content: center; gap: 3px; margin-top: 12px; padding-right: 9px; }
.legend span { position: relative; display: flex; align-items: center; gap: 4px; white-space: pre; }
.legend i { width: 8px; height: 8px; }
.lh { position: absolute; width: 7px; height: 7px; border: 1px solid #777; border-radius: 50%; background: #fff; }
.h1 { left: -3px; top: -2px; } .h2 { right: -3px; top: -2px; } .h3 { left: -3px; bottom: -4px; } .h4 { right: -3px; bottom: -4px; }
.handle { position: absolute; width: 12px; height: 12px; margin: -6px; border: 1px solid #777; border-radius: 50%; background: #fff; }
.floaters { position: absolute; left: 724px; top: 6px; display: flex; flex-direction: column; gap: 8px; }
.floaters button { width: 28px; height: 28px; border: 1px solid #e2e2e2; border-radius: 5px; background: #fff; box-shadow: 0 1px 4px #ccc; padding: 0; display: grid; place-items: center; }
.arrow { position: absolute; overflow: visible; filter: drop-shadow(2px 2px 2px rgba(0, 0, 0, .4)); z-index: 9; pointer-events: none; transform-origin: 0 0; }
.a3 { left: 622px; top: 391px; transform: rotate(-121deg); }
.a1 { left: 123px; top: 2px; transform: rotate(87deg); }
.a2 { left: 117px; top: 140px; transform: rotate(-136deg); }
.vthumb { position: absolute; right: 4px; top: 626px; width: 8px; height: 75px; border-radius: 4px; background: #c6c8c9; }
.tri { width: 0; height: 0; border: 3px solid transparent; }
.tri.up { position: absolute; right: 5px; top: 2px; border-bottom: 5px solid #777; }
.up2 { border-bottom-color: #999; border-top: 0; }
.tri.down { border-top-color: #999; border-bottom: 0; }
.pagers { position: absolute; right: 5px; top: 788px; display: flex; flex-direction: column; gap: 12px; }
.notes { height: 34px; border-top: 1px solid #cbcccb; padding: 0 12px; line-height: 30px; font-size: 13px; color: #808384; }

.props { width: 262px; flex: none; border-left: 1px solid #cdcecb; padding: 0 17px 0 16px; position: relative; }
.phead { display: flex; align-items: center; height: 49px; padding-left: 4px; font-size: 14px; gap: 2px; }
.pinb { margin-left: auto; margin-right: 12px; }
.phead .bare:last-child { margin-right: 5px; }
.seg { display: flex; height: 31px; padding: 2px; border-radius: 6px; background: #d9dad8; }
.seg button { flex: 1; border: 0; border-radius: 5px; background: none; color: #5c5f61; display: flex; align-items: center; justify-content: center; gap: 7px; }
.seg .on { background: #fff; color: #222; font-weight: 700; }
.ptabs { display: flex; gap: 16px; height: 52px; align-items: center; padding-left: 1px; }
.ptabs .cur { font-weight: 700; }
.fillrow { display: flex; align-items: center; height: 26px; font-weight: 700; }
.caret { width: 0; height: 0; margin: 0 5px 0 2px; border: 4px solid transparent; border-top: 6px solid #777; border-bottom: 0; }
.caret.r { border: 4px solid transparent; border-left: 6px solid #777; border-right: 0; }
.combo { position: relative; margin-left: auto; font-weight: 400; }
.swbtn { width: 130px; height: 24px; border: 1px solid #2a5bd7; border-radius: 4px; background: #fff; padding: 0 4px 0 3px; display: flex; align-items: center; justify-content: space-between; }
.swbtn i { width: 102px; height: 16px; background: #f0c092; }
.popup { position: absolute; right: 2px; top: 29px; width: 202px; z-index: 5; background: #fff; border-radius: 8px; box-shadow: 0 4px 20px rgba(0, 0, 0, .16), 0 0 1px #bbc; padding: 7px 6px 13px 7px; }
.nofill { height: 22px; padding-left: 6px; gap: 7px; }
.popup h5 { margin: 0; height: 19px; padding-left: 9px; font-size: 12px; line-height: 18px; font-weight: 400; background: #f3f4f6; color: #3f4a5e; }
.sw { display: grid; grid-template-columns: repeat(10, 14px); column-gap: 4px; margin: 4px 4px 8px; }
.sw button { height: 14px; border: 1px solid #e1e1e6; padding: 0; }
.ramp { margin-bottom: 5px; }
.sw .pick { border: 1px solid #f2a300; box-shadow: inset 0 0 0 1px #fde3b0; }
.grads { display: grid; grid-template-columns: repeat(7, 20px); justify-content: space-between; row-gap: 6px; margin: 9px 5px 0 4px; }
.grads button { height: 20px; border: 1px solid rgba(90, 60, 40, .25); border-radius: 2px; padding: 0; }
.moreg { height: 52px; margin: 0 8px 8px; width: 173px; border-bottom: 1px solid #999; padding: 0 8px 0 9px; gap: 7px; }
.moreg :deep(.icon) { margin-left: auto; }
.wheel { width: 16px; height: 16px; border-radius: 50%; background: radial-gradient(#fff 15%, rgba(255, 255, 255, 0) 60%), conic-gradient(#f0f, #f44, #fc0, #6e3, #2cf, #54f, #f0f); }
.tiles { display: flex; gap: 4px; padding: 6px 8px; }
.tex { gap: 6px; padding: 7px 7px 0; }
.radios { display: flex; flex-direction: column; gap: 18px; margin: 21px 0 0 18px; }
.radios input { appearance: none; width: 14px; height: 14px; margin: 0; border: 1px solid #999; border-radius: 50%; }
.radios input:checked { border-color: #1a6cf0; background: radial-gradient(#1a6cf0 30%, transparent 36%); }
.prow { display: flex; justify-content: space-between; align-items: center; height: 20px; margin: 15px 0 0 12px; }
.prow + .prow { margin-top: 12px; }
.prow i:last-child { width: 60px; height: 20px; border: 1px solid #ccc; border-radius: 4px; }
.props .line { margin: 36px 0 0; font-weight: 700; justify-content: flex-start; }
.line i:last-child { margin-left: auto; }

.rail { width: 55px; flex: none; border-left: 1px solid #cbccca; position: relative; display: flex; flex-direction: column; align-items: center; gap: 8px; padding: 9px 2px 0 0; }
.rail .bare { width: 32px; height: 32px; justify-content: center; border-radius: 5px; }
.rail .on { background: #cfd1d0; }
.rail .bare:first-child { margin-bottom: -8px; }
.meter { position: absolute; right: 3px; top: 595px; width: 8px; height: 58px; border-radius: 4px; background: linear-gradient(#9b9c98 19px, #22cb66 19px, #2bd067 65%, #7cf08a); box-shadow: 0 1px 3px #aaa; }

.status { flex: none; height: 24px; border-top: 1px solid #c9cbcb; display: flex; align-items: center; padding: 0 20px 2px 13px; }
.ssep { width: 1px; height: 14px; background: #c6c8c8; }
.pg { margin-right: 10px; white-space: nowrap; }
.thm { margin-left: 16px; gap: 4px; }
.sright { margin-left: auto; display: flex; align-items: center; }
.sright .bare { gap: 4px; }
.w { margin: 0 14px; }
.cm { margin-left: 21px; }
.cs { margin: 0 8px 0 14px; }
.vw { width: 24px; height: 20px; justify-content: center; border-radius: 4px; margin-right: 8px; }
.vw.on { background: #d0d0cc; }
.n { margin: 0 10px 0 4px; }
.vw + .n { margin-left: 0; }
.play { width: 20px; height: 19px; border-radius: 3px; background: #e4661a; justify-content: center; margin-right: 4px; }
.sright .play + :deep(.icon) { margin-right: 4px; }
.fitb { margin: 0 22px 0 4px; }
.pct { margin-right: 12px; }
.mn { margin: 0 12px 0 10px; }
.sright input { appearance: none; width: 112px; height: 12px; margin: 0 8px 0 0; background: linear-gradient(90deg, #2f62d9 45%, #b9bab8 45%) center / 100% 2px no-repeat; }
.sright input::-webkit-slider-thumb { appearance: none; width: 10px; height: 10px; border-radius: 5px; border: 1px solid #bbb; background: #fff; }

.wm { position: absolute; right: 11px; bottom: 18px; width: 472px; height: 113px; background: rgba(255, 255, 255, .6); z-index: 20; pointer-events: none; display: flex; justify-content: space-between; padding: 0 7px 0 11px; }
.wtext { display: flex; flex-direction: column; white-space: nowrap; }
.wtext strong { font: 700 49px/58px "Noto Sans CJK SC", sans-serif; color: #fa2a2a; }
.wtext span { font: 700 37px/60px "Liberation Serif", serif; color: #2a7ef8; }
.tag { width: 190px; border-radius: 28px; background: #2b7dfa; color: #fafafa; font: 700 90px/98px "Noto Sans CJK SC", sans-serif; text-align: center; }
.wm2 { position: absolute; right: 0; bottom: -16px; display: flex; align-items: flex-end; opacity: .7; }
.wm2 svg { opacity: .6; }
.wm2 div { display: flex; flex-direction: column; margin-left: -6px; }
.wm2 b { font-size: 21px; line-height: 26px; color: #5fa0e8; font-weight: 700; opacity: .6; }
.wm2 em { font: 700 16px/22px "Liberation Sans", sans-serif; color: #22b14c; }
</style>
